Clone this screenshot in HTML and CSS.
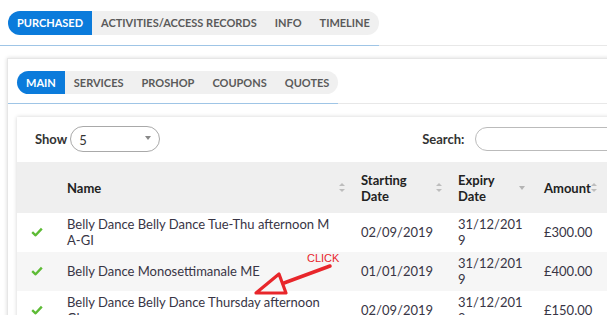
FILE: index.html
```html
<!DOCTYPE html>
<html lang="en">
<head>
    <meta charset="UTF-8">
    <meta name="viewport" content="width=device-width, initial-scale=1.0">
    <title>Purchased</title>
    <link rel="stylesheet" href="styles.css">
</head>
<body>
    <!-- top tabs -->
    <div class="tab-line">
        <ul class="pills pills-top">
            <li class="active">PURCHASED</li>
            <li>ACTIVITIES/ACCESS RECORDS</li>
            <li>INFO</li>
            <li>TIMELINE</li>
        </ul>
    </div>

    <div class="card">
        <!-- inner tabs -->
        <div class="tab-line">
            <ul class="pills pills-inner">
                <li class="active">MAIN</li>
                <li>SERVICES</li>
                <li>PROSHOP</li>
                <li>COUPONS</li>
                <li>QUOTES</li>
            </ul>
        </div>

        <div class="box">
            <div class="toolbar">
                <label class="show">Show
                    <span class="select">5<span class="caret"></span></span>
                </label>
                <label class="search">Search:
                    <span class="search-input"></span>
                </label>
            </div>

            <table class="grid">
                <colgroup>
                    <col class="c-icon">
                    <col class="c-name">
                    <col class="c-start">
                    <col class="c-exp">
                    <col class="c-amt">
                </colgroup>
                <thead>
                    <tr>
                        <th></th>
                        <th><div class="th-in"><span>Name</span><i class="sort"></i></div></th>
                        <th><div class="th-in"><span>Starting Date</span><i class="sort"></i></div></th>
                        <th><div class="th-in"><span>Expiry Date</span><i class="sort-desc"></i></div></th>
                        <th><div class="th-in tight"><span>Amount</span><i class="sort"></i></div></th>
                    </tr>
                </thead>
                <tbody>
                    <tr>
                        <td class="ok"><svg width="12" height="10" viewBox="0 0 12 10"><path d="M1.2 5.2 L4.6 8.3 L10.8 1.6" fill="none" stroke="#5dbb35" stroke-width="2.4" stroke-linejoin="round"/></svg></td>
                        <td class="name">Belly Dance Belly Dance Tue-Thu afternoon MA-GI</td>
                        <td>02/09/2019</td>
                        <td>31/12/2019</td>
                        <td>£300.00</td>
                    </tr>
                    <tr class="alt">
                        <td class="ok"><svg width="12" height="10" viewBox="0 0 12 10"><path d="M1.2 5.2 L4.6 8.3 L10.8 1.6" fill="none" stroke="#5dbb35" stroke-width="2.4" stroke-linejoin="round"/></svg></td>
                        <td class="name">Belly Dance Monosettimanale ME</td>
                        <td>01/01/2019</td>
                        <td>31/12/2019</td>
                        <td>£400.00</td>
                    </tr>
                    <tr>
                        <td class="ok"><svg width="12" height="10" viewBox="0 0 12 10"><path d="M1.2 5.2 L4.6 8.3 L10.8 1.6" fill="none" stroke="#5dbb35" stroke-width="2.4" stroke-linejoin="round"/></svg></td>
                        <td class="name">Belly Dance Belly Dance Thursday afternoon Gl</td>
                        <td>02/09/2019</td>
                        <td>31/12/2019</td>
                        <td>£150.00</td>
                    </tr>
                </tbody>
            </table>
        </div>
    </div>

    <!-- annotation drawn on top of the screenshot -->
    <svg class="note" width="607" height="315" viewBox="0 0 607 315">
        <text x="307" y="262" class="note-text">CLICK</text>
        <line x1="284" y1="283" x2="330" y2="266" stroke="#e8262b" stroke-width="3.5" stroke-linecap="round"/>
        <polygon points="256,293 279,274 286,293" fill="none" stroke="#e8262b" stroke-width="3.2" stroke-linejoin="round"/>
    </svg>
</body>
</html>
```

FILE: styles.css
```css
html, body {
    margin: 0;
    overflow: hidden;
}
body {
    width: 607px;
    height: 315px;
    position: relative;
    font-family: Lato, "Open Sans", sans-serif;
    color: #383545;
    background: #fff;
}

/* tabs */
.tab-line {
    border-bottom: 1px solid #e8e8e8;
}
.pills {
    display: inline-flex;
    list-style: none;
    margin: 0 0 -1px 0;
    border-bottom: 1px solid #9fc5e6;
}
.pills li {
    height: 24px;
    line-height: 24px;
    padding: 0 9px;
    font-size: 11px;
    font-weight: 700;
    color: #5a5a5a;
    background: #f0f0f0;
}
.pills li:first-child {
    border-radius: 12px 0 0 12px;
}
.pills li:last-child {
    border-radius: 0 12px 12px 0;
}
.pills li.active {
    background: #0b7bdb;
    color: #fff;
}
.pills-top {
    padding: 11px 0 10px 8px;
}
.pills-inner {
    padding: 12px 0 9px 9px;
}
.pills-inner li {
    height: 23px;
    line-height: 23px;
}

/* card */
.card {
    margin: 12px 0 0 7px;
    width: 640px;
    height: 300px;
    background: #fff;
    border: 1px solid #e6e6e6;
    border-right: 0;
    box-shadow: 0 0 4px rgba(0, 0, 0, 0.15);
}
.box {
    margin: 13px 0 0 9px;
    width: 620px;
    background: #fff;
    box-shadow: 0 0 4px rgba(0, 0, 0, 0.18);
}

/* toolbar */
.toolbar {
    display: flex;
    align-items: center;
    padding: 9px 0 10px 18px;
    font-size: 13px;
    font-weight: 700;
    color: #333;
}
.show {
    display: flex;
    align-items: center;
}
.select {
    position: relative;
    box-sizing: border-box;
    width: 90px;
    height: 26px;
    margin-left: 3px;
    padding: 3px 0 0 8px;
    border: 1px solid #a9a9a9;
    border-radius: 13px;
    font-weight: 400;
    font-size: 13px;
    line-height: 20px;
}
.caret {
    position: absolute;
    right: 8px;
    top: 9px;
    border-left: 3.5px solid transparent;
    border-right: 3.5px solid transparent;
    border-top: 4px solid #888;
}
.search {
    display: flex;
    align-items: center;
    margin-left: 262px;
}
.search-input {
    display: block;
    width: 150px;
    height: 22px;
    margin-left: 11px;
    border: 1px solid #bbb;
    border-radius: 12px;
}

/* table */
.grid {
    table-layout: fixed;
    border-collapse: collapse;
    width: 597px;
    font-size: 13px;
}
.c-icon { width: 40px; }
.c-name { width: 294px; }
.c-start { width: 97px; }
.c-exp { width: 86px; }
.c-amt { width: 80px; }

.grid thead tr {
    background: #efefef;
    height: 51px;
}
.grid th {
    padding: 0 6px 0 10px;
    text-align: left;
    font-weight: 700;
    color: #222;
    line-height: 16px;
}
.th-in {
    display: flex;
    align-items: center;
    justify-content: space-between;
}
.th-in span {
    width: 62px;
}
.grid th:nth-child(2) .th-in span {
    width: auto;
}
.th-in.tight {
    justify-content: flex-start;
}
.th-in.tight span {
    width: auto;
}
.sort {
    display: block;
    width: 6px;
    height: 9px;
    flex: none;
    position: relative;
}
.sort::before, .sort::after {
    content: "";
    position: absolute;
    left: 0;
    border-left: 3px solid transparent;
    border-right: 3px solid transparent;
}
.sort::before {
    top: 0;
    border-bottom: 3.5px solid #bdbdbd;
}
.sort::after {
    bottom: 0;
    border-top: 3.5px solid #bdbdbd;
}
.sort-desc {
    display: block;
    flex: none;
    width: 0;
    height: 0;
    margin-right: 3px;
    border-left: 3.5px solid transparent;
    border-right: 3.5px solid transparent;
    border-top: 4px solid #b4b4b4;
}

.grid td {
    padding: 3px 10px 4px 10px;
    line-height: 16px;
    height: 32px;
    word-break: break-all;
    vertical-align: middle;
}
.grid td.name {
    padding-right: 19px;
}
.grid tr.alt td {
    background: #f6f6f6;
}
.grid td.ok {
    padding-left: 14px;
}
.grid td.ok svg {
    display: block;
}

/* annotation */
.note {
    position: absolute;
    left: 0;
    top: 0;
    pointer-events: none;
}
.note-text {
    font-family: "Liberation Sans", Arial, sans-serif;
    font-size: 11px;
    fill: #e8262b;
}
```
